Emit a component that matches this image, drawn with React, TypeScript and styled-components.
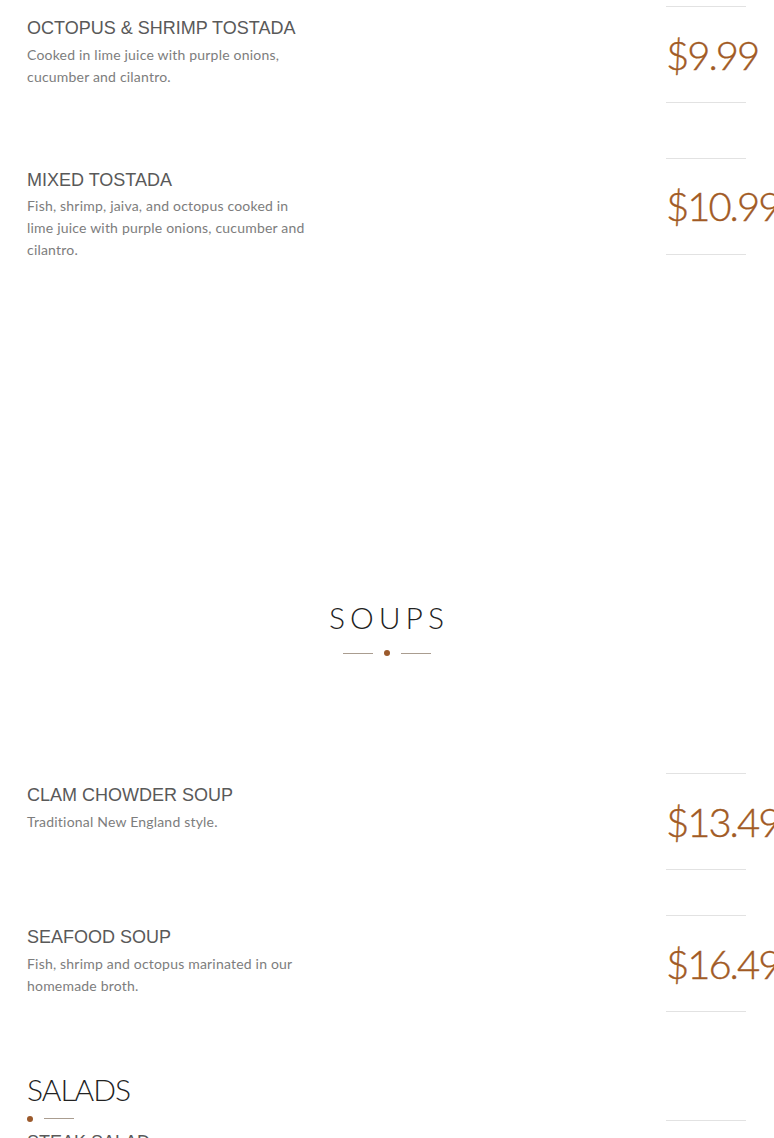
import React from "react";
import styled, { createGlobalStyle } from "styled-components";

// colours taken from the reference
const BROWN = "#a15a24";
const RULE = "#e2e2e2";

const GlobalStyle = createGlobalStyle`
  html, body {
    margin: 0;
    padding: 0;
    background: #fff;
  }
  body {
    font-family: "Lato", "Liberation Sans", sans-serif;
  }
`;

const Page = styled.div`
  padding: 6px 28px 0 27px;
  overflow: hidden;
`;

const Section = styled.section<{ $padTop?: number }>`
  padding-top: ${(p) => p.$padTop ?? 0}px;
`;

const SectionHead = styled.div<{ $center?: boolean }>`
  display: flex;
  flex-direction: column;
  align-items: ${(p) => (p.$center ? "center" : "flex-start")};
  margin-bottom: ${(p) => (p.$center ? 117 : -2)}px;
`;

const Heading = styled.h2<{ $center?: boolean }>`
  margin: 0;
  font-family: "Lato", sans-serif;
  font-weight: 300;
  font-size: 30px;
  line-height: 36px;
  color: #222;
  letter-spacing: ${(p) => (p.$center ? "5px" : "-1px")};
  padding-left: ${(p) => (p.$center ? "5px" : "0")};
`;

const Divider = styled.div<{ $center?: boolean }>`
  display: flex;
  align-items: center;
  gap: 11px;
  height: 6px;
  margin-top: ${(p) => (p.$center ? 15 : 9)}px;
`;

const DividerLine = styled.span<{ $hidden?: boolean }>`
  display: ${(p) => (p.$hidden ? "none" : "block")};
  width: 30px;
  height: 1px;
  background: #aa9d90;
`;

const Dot = styled.span`
  width: 6px;
  height: 6px;
  border-radius: 50%;
  background: #9b5a2c;
`;

const Row = styled.div`
  display: flex;
  justify-content: space-between;
  align-items: flex-start;
  margin-bottom: 45px;
`;

const TextCol = styled.div`
  width: 290px;
  padding: 12px 0 25px;
`;

const ItemTitle = styled.h3`
  margin: 0 0 4px;
  font-family: "Liberation Sans", Arial, sans-serif;
  font-weight: 400;
  font-size: 18px;
  line-height: 21.6px;
  color: #595959;
  text-transform: uppercase;
`;

const ItemDesc = styled.p`
  margin: 0;
  font-family: "Lato", sans-serif;
  font-size: 14px;
  line-height: 22px;
  letter-spacing: 0.2px;
  color: #7d7d7d;
`;

const PriceBox = styled.div`
  width: 80px;
  height: 97px;
  box-sizing: border-box;
  border-top: 1px solid ${RULE};
  border-bottom: 1px solid ${RULE};
  display: flex;
  align-items: center;
  white-space: nowrap;
  font-family: "Lato", sans-serif;
  font-weight: 300;
  font-size: 40px;
  letter-spacing: -2px;
  color: ${BROWN};
  -webkit-text-stroke: 0.4px ${BROWN};
`;

type Item = { name: string; desc: string; price: string };

const tostadas: Item[] = [
  {
    name: "Octopus & Shrimp Tostada",
    desc: "Cooked in lime juice with purple onions, cucumber and cilantro.",
    price: "$9.99",
  },
  {
    name: "Mixed Tostada",
    desc: "Fish, shrimp, jaiva, and octopus cooked in lime juice with purple onions, cucumber and cilantro.",
    price: "$10.99",
  },
];

const soups: Item[] = [
  { name: "Clam Chowder Soup", desc: "Traditional New England style.", price: "$13.49" },
  {
    name: "Seafood Soup",
    desc: "Fish, shrimp and octopus marinated in our homemade broth.",
    price: "$16.49",
  },
];

const salads: Item[] = [{ name: "Steak Salad", desc: "", price: "" }];

const MenuRow = ({ item }: { item: Item }) => (
  <Row>
    <TextCol>
      <ItemTitle>{item.name}</ItemTitle>
      {item.desc && <ItemDesc>{item.desc}</ItemDesc>}
    </TextCol>
    <PriceBox>{item.price}</PriceBox>
  </Row>
);

const Head = ({ title, center }: { title: string; center?: boolean }) => (
  <SectionHead $center={center}>
    <Heading $center={center}>{title}</Heading>
    <Divider $center={center}>
      <DividerLine $hidden={!center} />
      <Dot />
      <DividerLine />
    </Divider>
  </SectionHead>
);

export default function App() {
  return (
    <>
      <GlobalStyle />
      <Page>
        <Section>
          {tostadas.map((it) => (
            <MenuRow key={it.name} item={it} />
          ))}
        </Section>

        <Section $padTop={268}>
          <Head title="SOUPS" center />
          {soups.map((it) => (
            <MenuRow key={it.name} item={it} />
          ))}
        </Section>

        <Section $padTop={4}>
          <Head title="SALADS" />
          {salads.map((it) => (
            <MenuRow key={it.name} item={it} />
          ))}
        </Section>
      </Page>
    </>
  );
}
